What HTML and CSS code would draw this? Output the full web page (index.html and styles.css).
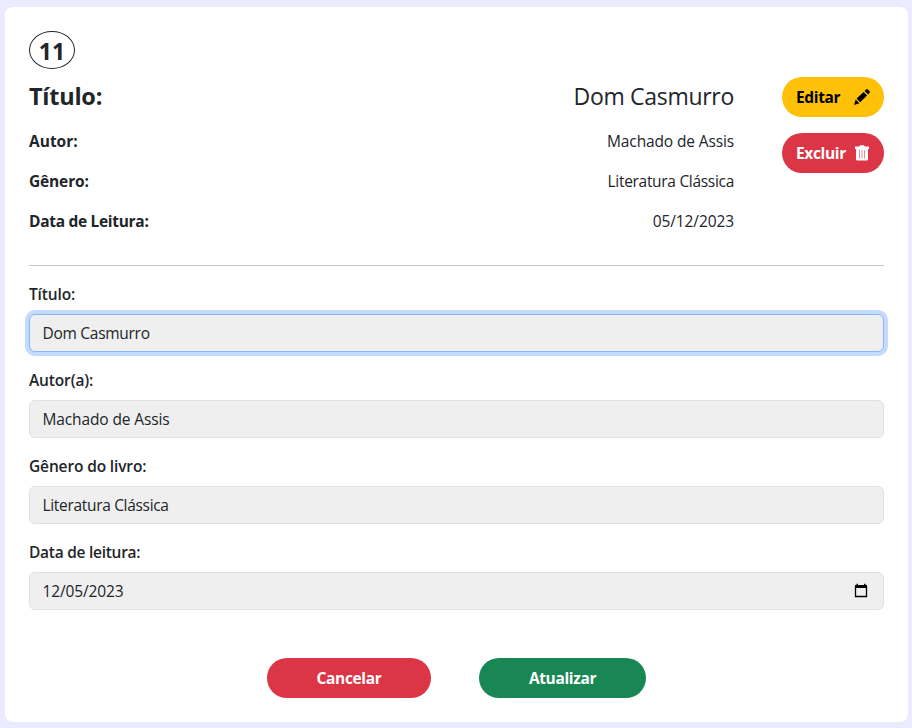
FILE: index.html
```html
<!DOCTYPE html>
<html lang="pt-BR">
<head>
<meta charset="utf-8">
<title>Livros</title>
<link rel="stylesheet" href="styles.css">
</head>
<body>
<main class="card">
  <div class="badge"><span>11</span></div>
  <section class="summary">
    <div class="details">
      <div class="row row-title"><strong class="t-titulo">Título:</strong><span class="v-titulo">Dom Casmurro</span></div>
      <div class="row"><strong class="t-autor">Autor:</strong><span class="v-autor">Machado de Assis</span></div>
      <div class="row"><strong class="t-genero">Gênero:</strong><span class="v-genero">Literatura Clássica</span></div>
      <div class="row"><strong class="t-data">Data de Leitura:</strong><span class="v-data">05/12/2023</span></div>
    </div>
    <div class="actions">
      <button class="btn btn-edit" type="button"><span>Editar</span>
        <svg class="icon" width="18" height="18" viewBox="0 0 18 18"><path d="M1 17 2.7 11.6 6.4 15.3ZM3.6 10.6 10.6 3.9 14.1 7.4 7.2 14.3ZM11.6 3 13.4 1.2Q14 .7 14.6 1.2L16.8 3.4Q17.3 4 16.8 4.6L15.1 6.4Z" fill="currentColor"/></svg>
      </button>
      <button class="btn btn-delete" type="button"><span>Excluir</span>
        <svg class="icon" width="14" height="16" viewBox="0 0 14 16"><path d="M0 1.5H4.3L5 .3H9L9.7 1.5H14V4H0ZM1 4H13V14Q13 15.5 11.5 15.5H2.5Q1 15.5 1 14Z" fill="currentColor"/><path d="M4.5 5V13.5M7 5V13.5M9.5 5V13.5" stroke="#e68a9b" stroke-width="1"/></svg>
      </button>
    </div>
  </section>
  <hr>
  <form>
    <div class="field"><label class="l-titulo" for="titulo">Título:</label><input class="i-titulo focused" id="titulo" type="text" value="Dom Casmurro"></div>
    <div class="field"><label class="l-autor" for="autor">Autor(a):</label><input class="i-autor" id="autor" type="text" value="Machado de Assis"></div>
    <div class="field"><label class="l-genero" for="genero">Gênero do livro:</label><input class="i-genero" id="genero" type="text" value="Literatura Clássica"></div>
    <div class="field"><label class="l-data">Data de leitura:</label><div class="date i-data"><span>12/05/2023</span>
      <svg width="16" height="16" viewBox="0 0 16 16"><path d="M2.5 3.5H13.5V13.5H2.5Z" fill="none" stroke="#000" stroke-width="1.3"/><path d="M2 2H14V5H2ZM3.5 .8H5V3H3.5ZM11 .8H12.5V3H11Z"/></svg>
    </div></div>
    <div class="buttons">
      <button class="btn btn-cancel" type="button"><span>Cancelar</span></button>
      <button class="btn btn-save" type="button"><span>Atualizar</span></button>
    </div>
  </form>
</main>
</body>
</html>
```
FILE: styles.css
```css
* { box-sizing: border-box; }
body { margin: 0; padding: 7px 4px 6px 5px; background: #eaebff; color: #212529; font: 15.5px/24px "Open Sans", "Noto Sans", sans-serif; }
.card { height: 715px; padding: 24px; background: #fff; border-radius: 8px; }
.badge { width: 46px; height: 38px; border: 1px solid #212529; border-radius: 50%; display: flex; align-items: center; justify-content: center; font-size: 23px; font-weight: 700; }
.badge span { padding-top: 1px; }
.summary { display: flex; gap: 48px; margin-top: 8px; }
.details { width: 705px; }
.row { display: flex; justify-content: space-between; height: 24px; margin-bottom: 16px; white-space: nowrap; }
.row-title { height: 38px; margin-bottom: 14px; line-height: 38px; }
.row strong { font-size: 15.5px; font-weight: 700; }
.row .t-titulo { font-size: 23.5px; letter-spacing: -.25px; }
.row .v-titulo { font-size: 23px; letter-spacing: -.3px; }
.row .t-genero { letter-spacing: -.15px; }
.row .t-data { letter-spacing: -.3px; }
.v-autor { letter-spacing: -.13px; }
.v-genero { letter-spacing: -.3px; }
.v-data { letter-spacing: -.1px; }
.actions { width: 102px; display: flex; flex-direction: column; gap: 16px; }
.btn { height: 40px; border: 0; border-radius: 20px; padding: 0 14px; font: 700 15.5px/24px "Open Sans", "Noto Sans", sans-serif; letter-spacing: -.35px; color: #fff; display: flex; align-items: center; justify-content: space-between; white-space: nowrap; }
.btn-edit { background: #ffc107; color: #000; padding-right: 13px; }
.btn-delete { background: #dc3545; padding-right: 15px; }
.icon { display: block; flex: none; }
hr { height: 1px; margin: 16px 0; border: 0; background: #c7c8c9; }
.field { margin-bottom: 16px; }
.field label { display: block; height: 24px; margin-bottom: 8px; font-size: 15.5px; font-weight: 600; letter-spacing: -.14px; }
.field .l-data { letter-spacing: -.27px; }
.field input, .date { display: block; width: 100%; height: 38px; padding: 0 12px 0 12.5px; border: 1px solid #dee2e6; border-radius: 6px; background: #efefef; color: #212529; font: 15.5px/24px "Open Sans", "Noto Sans", sans-serif; letter-spacing: -.13px; outline: 0; }
.field .i-titulo { letter-spacing: -.28px; }
.field .i-genero { letter-spacing: -.32px; }
.field .focused { border-color: #86b7fe; box-shadow: 0 0 0 4px #c2dbfe; }
.field .date { display: flex; align-items: center; justify-content: space-between; }
.date svg { margin-right: 2px; }
.buttons { display: flex; justify-content: center; gap: 48px; margin-top: 48px; }
.buttons .btn { justify-content: center; }
.btn-cancel { width: 164px; background: #dc3545; }
.btn-save { width: 167px; background: #198754; }
```
